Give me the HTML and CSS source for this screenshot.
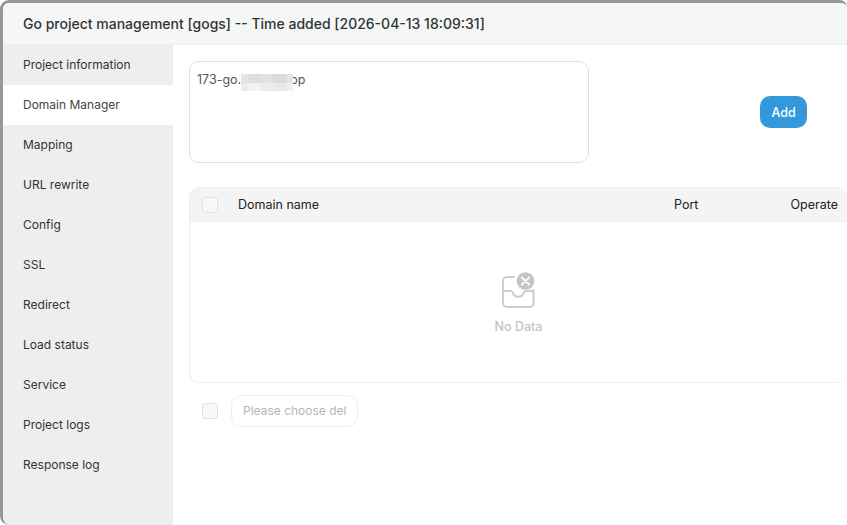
FILE: index.html
```html
<!DOCTYPE html>
<html lang="en">
<head>
<meta charset="utf-8">
<title>Go project management</title>
<link rel="stylesheet" href="styles.css">
</head>
<body>
<div class="dialog">
  <header class="title">Go project management [gogs] -- Time added [2026-04-13 18:09:31]</header>
  <div class="body">
    <nav class="side">
      <div class="item">Project information</div>
      <div class="item active">Domain Manager</div>
      <div class="item">Mapping</div>
      <div class="item">URL rewrite</div>
      <div class="item">Config</div>
      <div class="item">SSL</div>
      <div class="item">Redirect</div>
      <div class="item">Load status</div>
      <div class="item">Service</div>
      <div class="item">Project logs</div>
      <div class="item">Response log</div>
    </nav>
    <main class="main">
      <section class="add-row">
        <div class="domain-input">
          <span class="domain-text">173-go.<span class="masked"></span>op</span>
          <span class="mosaic"></span>
        </div>
        <button class="add-btn">Add</button>
      </section>
      <section class="table">
        <div class="thead">
          <span class="check"></span>
          <span class="col-name">Domain name</span>
          <span class="col-port">Port</span>
          <span class="col-op">Operate</span>
        </div>
        <div class="empty">
          <svg class="empty-icon" width="34" height="37" viewBox="0 0 34 37" fill="none">
            <path d="M13 5H6a4 4 0 0 0-4 4v22a4 4 0 0 0 4 4h22.500a4 4 0 0 0 4-4V18" stroke="#cccccc" stroke-width="2" stroke-linecap="round"/>
            <path d="M2 19h7.500c1.300 0 1.800.7 2.300 1.900.8 2.300 2.600 3.800 5.500 3.800s4.700-1.500 5.500-3.800c.5-1.200 1-1.900 2.300-1.900h7.400" stroke="#cccccc" stroke-width="2"/>
            <circle cx="24.500" cy="9" r="8.800" fill="#c4c4c4"/>
            <path d="M20.800 5.300l7.400 7.400M28.200 5.300l-7.400 7.400" stroke="#fff" stroke-width="1.800" stroke-linecap="round"/>
          </svg>
          <div class="empty-text">No Data</div>
        </div>
      </section>
      <section class="footer-row">
        <span class="check"></span>
        <div class="bulk">Please choose del</div>
      </section>
    </main>
  </div>
</div>
</body>
</html>
```

FILE: styles.css
```css
* { box-sizing: border-box; }
html, body { margin: 0; padding: 0; background: #fff; }
body { width: 847px; height: 525px; overflow: hidden; font-family: Inter, "Liberation Sans", sans-serif; }

.dialog {
  width: 847px;
  height: 525px;
  display: flex;
  flex-direction: column;
  border-top: 3px solid #979797;
  border-left: 3px solid #979797;
  border-radius: 9px 7px 0 9px;
  overflow: hidden;
  background: #fff;
}
.title {
  height: 42px;
  flex: none;
  padding-left: 20px;
  display: flex;
  align-items: center;
  background: #f5f7f7;
  border-bottom: 1px solid #ececec;
  color: #333;
  font-size: 14px;
  font-weight: 500;
}
.body { flex: 1; display: flex; min-height: 0; }

.side { width: 170px; flex: none; background: #eee; }
.item {
  height: 40px;
  padding: 0 0 1px 20px;
  display: flex;
  align-items: center;
  font-size: 12px;
  color: #333;
}
.item.active { background: #fff; color: #444; }

.main { flex: 1; padding: 16px 0 0 16px; min-width: 0; }

.add-row { display: flex; align-items: center; height: 102px; }
.domain-input {
  position: relative;
  width: 400px;
  height: 102px;
  padding: 10px 7px;
  border: 1px solid #dcdfe6;
  border-radius: 10px;
  align-self: flex-start;
  font-size: 12.500px;
  line-height: 16px;
  color: #555;
}
.masked { display: inline-block; width: 49px; }
.mosaic {
  position: absolute;
  left: 51px;
  top: 12px;
  width: 52px;
  height: 17px;
  background:
    linear-gradient(90deg, #e4e4e4 0 8px, #dedede 8px 20px, #e2e2e2 20px 30px, #dcdcdc 30px 46px, #e4e4e4 46px 52px) top / 100% 9px no-repeat,
    linear-gradient(90deg, #ececec 0 8px, #f2f2f2 8px 20px, #ececec 20px 36px, #e8e8e8 36px 46px, #f0f0f0 46px 52px) bottom / 100% 8px no-repeat;
  filter: blur(0.600px);
}
.add-btn {
  margin-left: 171px;
  width: 47px;
  height: 32px;
  padding: 0;
  border: 0;
  border-radius: 10px;
  background: #3498db;
  color: #fff;
  font-family: inherit;
  font-size: 12.500px;
  font-weight: 500;
}

.table {
  margin-top: 24px;
  height: 196px;
  border: 1px solid #eeeeee;
  border-right: 0;
  border-radius: 10px;
  overflow: hidden;
}
.thead {
  height: 34px;
  display: flex;
  align-items: center;
  background: #f4f4f5;
  border-bottom: 1px solid #eeeeee;
  padding-left: 12px;
  font-size: 12.500px;
  color: #222;
}
.check {
  width: 16px;
  height: 16px;
  flex: none;
  background: #f8f8fa;
  border: 1px solid #dfe1e8;
  border-radius: 3px;
}
.col-name { margin-left: 20px; width: 436px; }
.col-port { width: 60px; }
.col-op { width: 93px; padding-right: 9px; text-align: right; margin-left: auto; }

.empty {
  height: 160px;
  display: flex;
  flex-direction: column;
  align-items: center;
  padding-top: 50px;
}
.empty-icon { display: block; margin-left: -2px; }
.empty-text {
  margin-top: 10px;
  font-size: 12.500px;
  font-weight: 500;
  line-height: 16px;
  color: #c4c4c4;
}

.footer-row {
  margin-top: 12px;
  padding-left: 13px;
  display: flex;
  align-items: center;
  gap: 13px;
}
.bulk {
  width: 127px;
  height: 32px;
  padding: 0 0 1px 11px;
  display: flex;
  align-items: center;
  border: 1px solid #eeeeee;
  border-radius: 10px;
  font-size: 12px;
  color: #b4b6bb;
  white-space: nowrap;
}
```
